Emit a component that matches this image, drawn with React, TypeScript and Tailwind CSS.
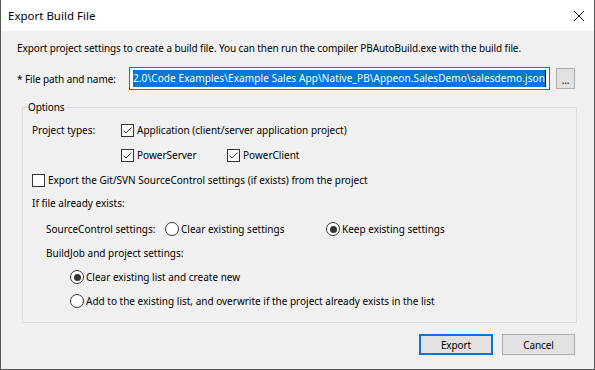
import React from "react";

const font = "font-['Noto_Sans',sans-serif] text-[10px] leading-[14px] tracking-[-0.1px] text-black";

const Check = ({ checked }: { checked?: boolean }) => (
  <span className="flex h-[13px] w-[13px] shrink-0 items-center justify-center border border-[#333333] bg-white">
    {checked && (
      <svg width="11" height="11" viewBox="0 0 11 11">
        <path d="M1.5 5.5 L4 8 L9.5 2.5" fill="none" stroke="#333333" strokeWidth="1" />
      </svg>
    )}
  </span>
);

const Radio = ({ checked }: { checked?: boolean }) => (
  <span className="flex h-[14px] w-[14px] shrink-0 items-center justify-center rounded-full border border-[#333333] bg-white">
    {checked && <span className="h-[7px] w-[7px] rounded-full bg-[#333333]" />}
  </span>
);

const CheckItem = ({ label, checked, className = "" }: { label: string; checked?: boolean; className?: string }) => (
  <div className={"flex items-center gap-[3px] whitespace-nowrap " + className}>
    <Check checked={checked} />
    <span>{label}</span>
  </div>
);

const RadioItem = ({ label, checked, className = "" }: { label: string; checked?: boolean; className?: string }) => (
  <div className={"flex items-center gap-[2px] whitespace-nowrap " + className}>
    <Radio checked={checked} />
    <span>{label}</span>
  </div>
);

export default function App() {
  return (
    <div className={"flex h-[370px] w-[595px] flex-col border-x border-b border-[#555555] bg-[#f0f0f0] " + font}>
      {/* title bar */}
      <div className="flex h-[31px] shrink-0 items-center justify-between bg-white pl-[7px] pr-[9px] text-[11.5px] tracking-normal">
        <span>Export Build File</span>
        <svg width="12" height="12" viewBox="0 0 12 12">
          <path d="M1 1 L11 11 M11 1 L1 11" stroke="#111111" strokeWidth="1" />
        </svg>
      </div>

      <div className="flex flex-1 flex-col pl-[16px]">
        <div className="mt-[10px] h-[14px] whitespace-nowrap">
          Export project settings to create a build file. You can then run the compiler PBAutoBuild.exe with the build file.
        </div>

        <div className="mt-[12px] flex h-[23px] items-center">
          <span className="w-[112px] whitespace-nowrap">* File path and name:</span>
          <div className="flex h-[23px] w-[421px] items-center justify-end overflow-hidden border border-[#0078d7] bg-white pr-[3px]">
            <span className="whitespace-nowrap bg-[#0078d7] leading-[17px] tracking-[0.1px] text-white">
              2.0\Code Examples\Example Sales App\Native_PB\Appeon.SalesDemo\salesdemo.json
            </span>
            <span className="h-[17px] w-[1px] shrink-0 bg-black" />
          </div>
          <button className="ml-[6px] flex h-[21px] w-[19px] items-end justify-center border border-[#adadad] bg-[#e1e1e1] pb-[3px] leading-[10px]">
            ...
          </button>
        </div>

        <fieldset className="ml-[5px] mt-[10px] w-[555px] border border-[#dcdcdc]">
          <legend className="ml-[4px] px-[1px]">Options</legend>
          <div className="flex flex-col pb-[11px] pl-[9px] tracking-normal">
            <div className="mt-[6px] flex h-[20px] items-center">
              <span className="w-[89px]">Project types:</span>
              <CheckItem checked label="Application (client/server application project)" />
            </div>
            <div className="mt-[5px] flex h-[20px] items-center pl-[89px]">
              <CheckItem checked label="PowerServer" className="w-[106px]" />
              <CheckItem checked label="PowerClient" />
            </div>
            <div className="mt-[5px] flex h-[20px] items-center">
              <CheckItem label="Export the Git/SVN SourceControl settings (if exists) from the project" />
            </div>
            <div className="mt-[3px] flex h-[20px] items-center">If file already exists:</div>
            <div className="mt-[6px] flex h-[20px] items-center pl-[14px]">
              <span className="w-[119px] whitespace-nowrap">SourceControl settings:</span>
              <RadioItem label="Clear existing settings" className="w-[161px]" />
              <RadioItem checked label="Keep existing settings" />
            </div>
            <div className="mt-[4px] flex h-[20px] items-center pl-[14px]">BuildJob and project settings:</div>
            <div className="mt-[4px] flex h-[20px] items-center pl-[38px]">
              <RadioItem checked label="Clear existing list and create new" />
            </div>
            <div className="mt-[4px] flex h-[20px] items-center pl-[38px]">
              <RadioItem label="Add to the existing list, and overwrite if the project already exists in the list" />
            </div>
          </div>
        </fieldset>

        <div className="mt-[11px] flex justify-end gap-[9px] pr-[19px]">
          <button className="h-[21px] w-[74px] border-2 border-[#0078d7] bg-[#e1e1e1]">Export</button>
          <button className="h-[21px] w-[73px] border border-[#adadad] bg-[#e1e1e1]">Cancel</button>
        </div>
      </div>
    </div>
  );
}
